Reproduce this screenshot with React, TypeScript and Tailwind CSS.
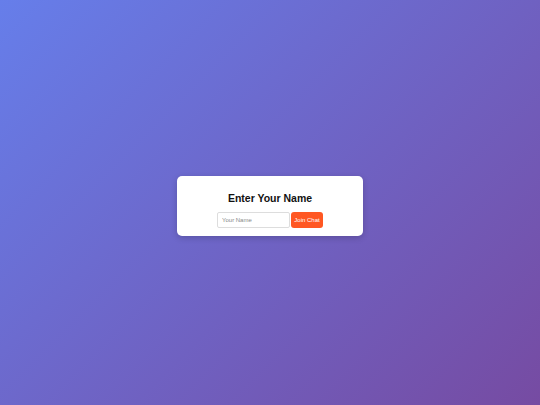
export default function App() {
  return (
    <div className="w-[540px] h-[405px] flex items-center justify-center bg-[linear-gradient(135deg,#667eea_0%,#764ba2_100%)] font-['Liberation_Sans',Arial,sans-serif]">
      <div className="w-[186px] h-[60px] bg-white rounded-[5px] shadow-[0_2px_6px_rgba(0,0,0,0.18)] flex flex-col items-center pt-[16px] mt-[7px]">
        <h2 className="text-[10.5px] leading-[12px] font-bold text-[#111]">Enter Your Name</h2>
        <div className="flex items-center mt-[8px]">
          <input
            type="text"
            placeholder="Your Name"
            className="w-[73px] h-[16px] border border-[#ddd] rounded-[2px] px-[4px] text-[6px] text-[#333] placeholder:text-[#888] outline-none"
          />
          <button className="ml-[1px] w-[32px] h-[16px] bg-[#ff5722] text-white text-[6px] rounded-[3px]">
            Join Chat
          </button>
        </div>
      </div>
    </div>
  )
}
